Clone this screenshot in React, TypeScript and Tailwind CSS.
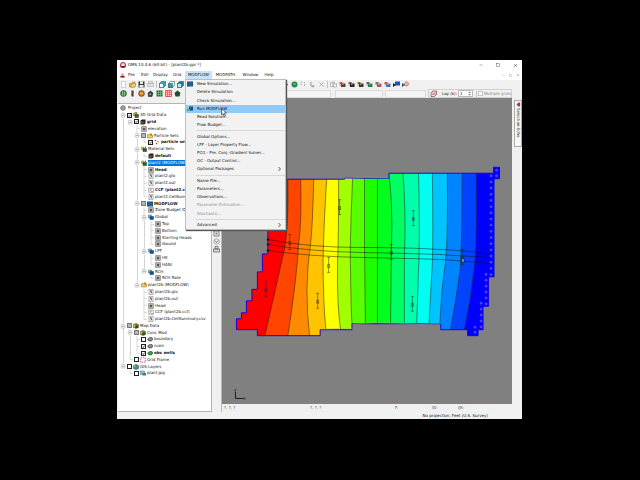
import React from 'react'
import { Minus, Square, X } from 'lucide-react'

type IconKind =
  | 'project'
  | 'cube'
  | 'darkGrid'
  | 'grid'
  | 'folder'
  | 'material'
  | 'particles'
  | 'file'
  | 'ccf'
  | 'modflow'
  | 'run'
  | 'package'
  | 'map'
  | 'coverage'
  | 'obs'
  | 'frame'
  | 'gis'
  | 'image'

interface TreeRow {
  level: number
  label: string
  icon: IconKind
  check?: 'on' | 'off' | 'gray'
  open?: boolean
  bold?: boolean
  selected?: boolean
}

interface MenuEntry {
  label: string
  disabled?: boolean
  active?: boolean
  submenu?: boolean
  icon?: IconKind
}

const rows: TreeRow[] = [
  { level: 0, label: '3D Grid Data', icon: 'cube', check: 'on', open: true },
  { level: 1, label: 'grid', icon: 'darkGrid', check: 'on', open: true, bold: true },
  { level: 2, label: 'elevation', icon: 'grid' },
  { level: 2, label: 'Particle Sets', icon: 'folder', check: 'gray', open: true },
  { level: 3, label: 'particle set', icon: 'particles', check: 'on', bold: true },
  { level: 2, label: 'Material Sets', icon: 'material', open: true },
  { level: 3, label: 'default', icon: 'darkGrid', bold: true },
  { level: 2, label: 'plant2 (MODFLOW)', icon: 'material', open: true, selected: true },
  { level: 3, label: 'Head', icon: 'grid', bold: true },
  { level: 3, label: 'plant2.glo', icon: 'file' },
  { level: 3, label: 'plant2.out', icon: 'file' },
  { level: 3, label: 'CCF (plant2.ccf)', icon: 'ccf', bold: true },
  { level: 3, label: 'plant2.CellSummary.csv', icon: 'file' },
  { level: 2, label: 'MODFLOW', icon: 'modflow', check: 'gray', open: true, bold: true },
  { level: 3, label: 'Zone Budget IDs', icon: 'grid' },
  { level: 3, label: 'Global', icon: 'package', open: true },
  { level: 4, label: 'Top', icon: 'grid' },
  { level: 4, label: 'Bottom', icon: 'grid' },
  { level: 4, label: 'Starting Heads', icon: 'grid' },
  { level: 4, label: 'Ibound', icon: 'grid' },
  { level: 3, label: 'LPF', icon: 'package', open: true },
  { level: 4, label: 'HK', icon: 'grid' },
  { level: 4, label: 'HANI', icon: 'grid' },
  { level: 3, label: 'RCH', icon: 'package', open: true },
  { level: 4, label: 'RCH Rate', icon: 'grid' },
  { level: 2, label: 'plant2b (MODFLOW)', icon: 'folder', open: true },
  { level: 3, label: 'plant2b.glo', icon: 'file' },
  { level: 3, label: 'plant2b.out', icon: 'file' },
  { level: 3, label: 'Head', icon: 'grid' },
  { level: 3, label: 'CCF (plant2b.ccf)', icon: 'ccf' },
  { level: 3, label: 'plant2b.CellSummary.csv', icon: 'file' },
  { level: 0, label: 'Map Data', icon: 'map', check: 'gray', open: true },
  { level: 1, label: 'Conc Mod', icon: 'map', check: 'gray', open: true },
  { level: 2, label: 'boundary', icon: 'coverage', check: 'off' },
  { level: 2, label: 'main', icon: 'coverage', check: 'on' },
  { level: 2, label: 'obs wells', icon: 'obs', check: 'on', bold: true },
  { level: 1, label: 'Grid Frame', icon: 'frame', check: 'off' },
  { level: 0, label: 'GIS Layers', icon: 'gis', check: 'off', open: true },
  { level: 1, label: 'plant.jpg', icon: 'image', check: 'off' }
]

const menuGroups: MenuEntry[][] = [
  [
    { label: 'New Simulation...', icon: 'modflow' },
    { label: 'Delete Simulation' },
    { label: 'Check Simulation...' },
    { label: 'Run MODFLOW', active: true, icon: 'run' },
    { label: 'Read Solution...' },
    { label: 'Flow Budget...' }
  ],
  [
    { label: 'Global Options...' },
    { label: 'LPF - Layer Property Flow...' },
    { label: 'PCG - Pre. Conj.-Gradient Solver...' },
    { label: 'OC - Output Control...' },
    { label: 'Optional Packages', submenu: true }
  ],
  [
    { label: 'Name File...' },
    { label: 'Parameters...' },
    { label: 'Observations...' },
    { label: 'Parameter Estimation...', disabled: true },
    { label: 'Stochastic...', disabled: true }
  ],
  [{ label: 'Advanced', submenu: true }]
]

// true when another row on the same branch follows further down
function hasLaterSibling(index: number, level: number) {
  for (let i = index + 1; i < rows.length; i++) {
    if (rows[i].level < level) return false
    if (rows[i].level === level) return true
  }
  return false
}

function TreeIcon({ kind }: { kind: IconKind }) {
  const shapes: Record<IconKind, React.ReactNode> = {
    project: (
      <>
        <circle cx="6" cy="6" r="4.5" fill="#d4d4d4" stroke="#444" strokeWidth="1.5" />
        <path d="M6 3v6M4 4v4M8 4v4" stroke="#555" />
      </>
    ),
    cube: (
      <>
        <path d="M1 3l3-2h4v6H1z" fill="#b4b83c" stroke="#4b5320" />
        <path d="M4 5h7v6H4z" fill="#2f6b3f" stroke="#143018" />
      </>
    ),
    darkGrid: (
      <>
        <path d="M1 3l3-2h7v8l-3 2H1z" fill="#222" />
        <path d="M3 4v6M6 4v6M2 6h7M2 8h7" stroke="#8b7b3c" strokeWidth=".8" />
      </>
    ),
    grid: (
      <>
        <path d="M1 1h10v10H1z" fill="#dcdcdc" stroke="#666" />
        <path d="M4 1v10M8 1v10M1 4h10M1 8h10" stroke="#777" />
        <path d="M4 4h4v4H4z" fill="#555" />
      </>
    ),
    folder: (
      <>
        <path d="M1 3h4l1 1h5v6H1z" fill="#f2d152" stroke="#8a6d1a" />
        <path d="M6 1h4v4H6z" fill="#c47a2c" />
      </>
    ),
    material: (
      <>
        <path d="M1 2h5v5H1z" fill="#e2cf4a" stroke="#80701f" />
        <path d="M4 5h7v6H4z" fill="#2f5c34" stroke="#1a331d" />
        <path d="M8 1h2v4H8z" fill="#3c8a49" />
      </>
    ),
    particles: (
      <>
        <circle cx="3" cy="3" r="1.5" fill="#c22" />
        <circle cx="8" cy="5" r="1.5" fill="#b55" />
        <circle cx="5" cy="9" r="1.5" fill="#c22" />
      </>
    ),
    file: (
      <>
        <path d="M2 .5h8v11H2z" fill="#fff" stroke="#555" />
        <path d="M7 3H5v2h2v3H5" fill="none" stroke="#222" strokeWidth="1.3" />
      </>
    ),
    ccf: (
      <>
        <path d="M1 2h10v9H1z" fill="#f4f4f4" stroke="#888" />
        <path d="M3 9l5-6M3 4h3M6 9h4" stroke="#555" />
      </>
    ),
    modflow: (
      <>
        <path d="M0 1h12v10H0z" fill="#12457a" />
        <path d="M1 4q3-2 5 0t5 0M1 8q3-2 5 0t5 0" fill="none" stroke="#5db0e8" />
      </>
    ),
    run: (
      <>
        <path d="M4 1h8v8H4z" fill="#12457a" />
        <path d="M5 4q2-2 3 0t3 0" fill="none" stroke="#5db0e8" />
        <path d="M0 4l6 4-6 4z" fill="#3f9c3a" stroke="#e8f4c8" strokeWidth=".6" />
      </>
    ),
    package: (
      <>
        <path d="M1 2h6v6H1z" fill="#7fc6cc" stroke="#23697a" />
        <path d="M4 5h7v6H4z" fill="#1c4f93" stroke="#15396b" />
      </>
    ),
    map: (
      <>
        <path d="M1 3l5-2 5 2v6l-5 2-5-2z" fill="#8b8f2b" stroke="#3e4313" />
        <path d="M5 5h5v5H5z" fill="#2a4a25" />
        <path d="M2 4h2v3H2z" fill="#e9df7a" />
      </>
    ),
    coverage: (
      <>
        <path d="M1 6l4-3h5l2 3-3 4H4z" fill="#777" stroke="#333" />
        <path d="M4 6h5" stroke="#ddd" />
      </>
    ),
    obs: <path d="M1 6l4-3h5l2 3-3 4H4z" fill="#2f9b4c" stroke="#1d4a2a" />,
    frame: <path d="M1.5 1.5h9v9h-9z" fill="none" stroke="#c4379c" strokeWidth="1.6" strokeDasharray="3 1.5" />,
    gis: (
      <>
        <path d="M1 3l5-2 5 2v6l-5 2-5-2z" fill="#3f8f86" stroke="#1d4f52" />
        <path d="M2 3h3v3H2z" fill="#9fd36c" />
      </>
    ),
    image: (
      <>
        <path d="M0 2h9v7H0z" fill="#8fc0dc" stroke="#47748c" />
        <path d="M5 6h7v5H5z" fill="#3d7f8f" />
      </>
    )
  }
  return (
    <svg viewBox="0 0 12 12" className="size-[6px] shrink-0">
      {shapes[kind]}
    </svg>
  )
}

function CheckBox({ state, label }: { state: 'on' | 'off' | 'gray'; label: string }) {
  const look =
    state === 'gray' ? 'bg-[#b5b5b5] border-[#777]' : 'bg-white border-[#222]'
  return (
    <span className="relative flex size-[5px] shrink-0">
      <input
        type="checkbox"
        aria-label={label}
        defaultChecked={state !== 'off'}
        className={`size-[5px] appearance-none border ${look}`}
      />
      {state === 'on' && (
        <svg viewBox="0 0 10 10" className="pointer-events-none absolute inset-0 size-[5px]">
          <path d="M2.5 5l2 2 3-4" fill="none" stroke="#111" strokeWidth="1.4" />
        </svg>
      )}
    </span>
  )
}

function ProjectTree() {
  return (
    <div className="flex h-[273px] flex-col pl-[2px] pt-px">
      <div className="flex min-h-0 flex-1 items-center gap-[2px]">
        <TreeIcon kind="project" />
        <span>Project</span>
      </div>
      {rows.map((row, index) => (
        <div key={index} className="flex min-h-0 flex-1 items-center">
          {Array.from({ length: row.level }, (_, level) => (
            <span
              key={level}
              className={`ml-[3px] w-[4px] shrink-0 self-stretch border-l ${
                hasLaterSibling(index, level) ? 'border-[#d4d4d4]' : 'border-transparent'
              }`}
            />
          ))}
          <span className="mr-px flex w-[6px] shrink-0 items-center justify-center self-stretch">
            <svg viewBox="0 0 12 14" className="h-full w-[6px]">
              <path
                d={hasLaterSibling(index, row.level) ? 'M6 0v14M6 7h6' : 'M6 0v7h6'}
                fill="none"
                stroke="#c8c8c8"
                strokeWidth="1.5"
              />
              {row.open && (
                <>
                  <path d="M2.5 3.5h7v7h-7z" fill="#fff" stroke="#a0a0a0" />
                  <path d="M4 7h4" stroke="#444" />
                </>
              )}
            </svg>
          </span>
          {row.check && (
            <span className="mr-px flex">
              <CheckBox state={row.check} label={row.label} />
            </span>
          )}
          <TreeIcon kind={row.icon} />
          <span
            className={`ml-px whitespace-nowrap ${row.bold ? 'font-bold' : ''} ${
              row.selected ? 'bg-[#0078d7] text-white' : ''
            }`}
          >
            {row.label}
          </span>
        </div>
      ))}
    </div>
  )
}

function ModflowMenu() {
  return (
    <div className="absolute left-0 top-full z-10 flex h-[151px] w-[101px] flex-col border border-[#bdbdbd] bg-[#f2f2f2] shadow-[1px_1px_1px_#555]">
      {menuGroups.map((group, g) => (
        <React.Fragment key={g}>
          {g > 0 && <hr className="my-px ml-[10px] border-[#d7d7d7]" />}
          {group.map((item) => (
            <button
              key={item.label}
              disabled={item.disabled}
              className={`flex min-h-0 flex-1 items-center text-left ${
                item.active ? 'bg-[#91c9f7]' : ''
              } ${item.disabled ? 'text-[#8d8d8d]' : ''}`}
            >
              <span className="flex w-[11px] shrink-0 items-center pl-px">
                {item.icon && <TreeIcon kind={item.icon} />}
              </span>
              <span className="flex-1 whitespace-nowrap">{item.label}</span>
              {item.submenu && (
                <svg viewBox="0 0 6 8" className="mr-[4px] h-[4px] w-[3px]">
                  <path d="M1 0l4 4-4 4" fill="none" stroke="#222" strokeWidth="1.4" />
                </svg>
              )}
            </button>
          ))}
        </React.Fragment>
      ))}
      <svg viewBox="0 0 12 18" className="absolute left-[35px] top-[28px] h-[9px] w-[6px]">
        <path d="M1 1v13l3-3 2.5 6 2.5-1-2.5-6H11z" fill="#fff" stroke="#111" strokeWidth="1.2" />
      </svg>
    </div>
  )
}

function ToolButton({ label, children }: { label: string; children: React.ReactNode }) {
  return (
    <button aria-label={label} className="flex w-[9px] shrink-0 items-center justify-center">
      <svg viewBox="0 0 14 14" className="size-[7px]">
        {children}
      </svg>
    </button>
  )
}

function Cube({ face, top }: { face: string; top: string }) {
  return (
    <>
      <path d="M1 5l4-4h8v8l-4 4H1z" fill={top} stroke="#14505a" />
      <path d="M1 5h8v8H1z" fill={face} stroke="#14505a" />
    </>
  )
}

function RunTool({ color, corner }: { color: string; corner: string }) {
  return (
    <>
      <path d="M1 2h6v4H1z" fill={corner} />
      <path d="M4 5h9v7H4z" fill={color} />
      <path d="M1 8h4M6 8h5M6 10h5" stroke="#444" />
      <path d="M6 7h3" stroke="#e8e08c" />
    </>
  )
}

function Divider() {
  return <span className="mx-px h-[7px] border-l border-[#c3c3c3]" />
}

const simTools = [
  { label: 'Wells', color: '#4c4a2a', corner: '#d45b3a' },
  { label: 'Rivers', color: '#1f1f1f', corner: '#8a5a3a' },
  { label: 'Drains', color: '#3a3a22', corner: '#a8582f' },
  { label: 'Recharge', color: '#2f8a55', corner: '#6a5a4a' },
  { label: 'Stress data', color: '#c26565', corner: '#8a6a6a' },
  { label: 'Boundary', color: '#5f7bc0', corner: '#c45555' }
]

function MainToolbar() {
  return (
    <div className="flex h-[9px] items-center pl-[2px]">
      <ToolButton label="New">
        <path d="M3 1h8v12H3z" fill="#fff" stroke="#aaa" />
      </ToolButton>
      <ToolButton label="Open">
        <path d="M1 5h5l1-3h5v10H1z" fill="#f0c03e" stroke="#8d6412" />
        <path d="M3 12l3-6h8l-3 6z" fill="#fbe08a" stroke="#8d6412" />
      </ToolButton>
      <ToolButton label="Save">
        <path d="M1 1h12v12H1z" fill="#333" />
        <path d="M4 1h6v5H4zM3 8h8v5H3z" fill="#eee" />
      </ToolButton>
      <ToolButton label="Print">
        <path d="M3 1h8v4H3zM1 5h12v6H1z" fill="#e3e3e3" stroke="#9c9c9c" />
      </ToolButton>
      <Divider />
      <ToolButton label="Plan view">
        <Cube face="#fff" top="#28a5b5" />
      </ToolButton>
      <ToolButton label="Front view">
        <Cube face="#2a9bb0" top="#e8f6f8" />
      </ToolButton>
      <ToolButton label="Side view">
        <Cube face="#bfe6ea" top="#167f92" />
      </ToolButton>
      {/* middle group sits under the open menu */}
      <span className="w-[100px] shrink-0" />
      <svg viewBox="0 0 6 10" className="h-[5px] w-[3px] shrink-0">
        <path d="M0 0l6 5-6 5z" fill="#111" />
      </svg>
      <span className="w-[2px] shrink-0" />
      <ToolButton label="Refresh">
        <circle cx="7" cy="7" r="6" fill="#1f8a4c" />
        <circle cx="7" cy="6" r="2.5" fill="#4fc07c" />
      </ToolButton>
      <ToolButton label="Select">
        <path d="M2 2h3M8 3h2M2 5v3M9 6v4" stroke="#aaa" strokeWidth="2" />
      </ToolButton>
      <ToolButton label="Zoom">
        <path d="M4 2v8h7M8 8v5" fill="none" stroke="#999" strokeWidth="2" />
      </ToolButton>
      <ToolButton label="Delete">
        <path d="M3 3l8 8M11 3l-8 8" stroke="#aaa" strokeWidth="2" />
      </ToolButton>
      <Divider />
      <ToolButton label="Cell properties">
        <path d="M1 3h5v8H1zM7 5h6v7H7z" fill="#eee" stroke="#888" />
        <path d="M5 2h5" stroke="#888" />
      </ToolButton>
      {simTools.map((tool) => (
        <ToolButton key={tool.label} label={tool.label}>
          <RunTool color={tool.color} corner={tool.corner} />
        </ToolButton>
      ))}
      <ToolButton label="Run MODFLOW">
        <path d="M4 1h10v8H4z" fill="#1d56b5" />
        <path d="M0 4l6 4-6 4z" fill="#222" />
      </ToolButton>
      <ToolButton label="Run MODPATH">
        <path d="M5 4l4-3 5 4-3 5-6-1z" fill="#e8b0a8" stroke="#c0483c" />
        <path d="M0 4l6 4-6 4z" fill="#2255aa" />
      </ToolButton>
    </div>
  )
}

function OptionsToolbar() {
  return (
    <div className="flex h-[9px] items-center pl-[2px]">
      <ToolButton label="Map module">
        <circle cx="7" cy="7" r="6" fill="#2f9444" stroke="#17421f" />
        <path d="M5 3v8M9 3v8" stroke="#d7efc4" />
      </ToolButton>
      <ToolButton label="Borehole module">
        <path d="M5 1h4v12H5z" fill="#333" />
        <path d="M5 4h4v3H5z" fill="#b43a2a" />
      </ToolButton>
      <ToolButton label="TIN module">
        <circle cx="7" cy="7" r="6" fill="#c66a22" stroke="#6b3110" />
        <path d="M4 5h6v4H4z" fill="#f0b44c" />
      </ToolButton>
      <ToolButton label="Solid module">
        <path d="M2 6l5-4 5 4-2 7H3z" fill="#2c4a5c" stroke="#111" />
        <path d="M5 7h3v3H5z" fill="#c8b04c" />
      </ToolButton>
      <ToolButton label="3D grid module">
        <path d="M1 1h12v12H1z" fill="#1f6b3c" />
        <path d="M5 1v12M9 1v12M1 5h12M1 9h12" stroke="#9ad0a0" />
      </ToolButton>
      <ToolButton label="2D grid module">
        <path d="M1 1h12v12H1z" fill="#f6dada" stroke="#c33" strokeWidth="1.5" />
        <path d="M5 1v12M9 1v12M1 5h12M1 9h12" stroke="#c33" />
      </ToolButton>
      <ToolButton label="Scatter module">
        <path d="M7 1l6 5-2 7H3L1 6z" fill="#1f4a35" />
      </ToolButton>
      <ToolButton label="GIS module">
        <path d="M4 1h6v12H4z" fill="#23395c" />
      </ToolButton>
      <span className="w-[94px] shrink-0" />
      <select aria-label="Data set" disabled className="h-[8px] w-[46px] appearance-none border border-[#dadada] bg-[#f5f5f5]" />
      <span className="w-[4px] shrink-0" />
      <select aria-label="Time step" disabled className="h-[8px] w-[48px] appearance-none border border-[#dadada] bg-[#f5f5f5]" />
      <span className="w-[2px] shrink-0" />
      <select aria-label="Units" disabled className="h-[8px] w-[41px] appearance-none border border-[#dadada] bg-[#f5f5f5]" />
      <span className="w-[2px] shrink-0" />
      <div className="flex h-[9px] flex-1 items-center border border-[#d2d2d2]">
        <ToolButton label="Layers">
          <path d="M2 6l4-4h7v7l-4 4H2z" fill="#f4e4e4" stroke="#853b3b" strokeWidth="1.4" />
          <path d="M5 6h5v4M4 9h5" fill="none" stroke="#853b3b" />
        </ToolButton>
        <label htmlFor="layer" className="ml-[4px] w-[16px] whitespace-nowrap">
          Lay (k):
        </label>
        <span className="flex h-[7px] w-[15px] items-center justify-between border border-[#bbb] bg-white pr-px">
          <input id="layer" type="text" defaultValue="1" className="w-[8px] pl-px leading-none outline-none" />
          <svg viewBox="0 0 6 12" className="h-[5px] w-[3px]">
            <path d="M0 4l3-3 3 3zM0 8l3 3 3-3z" fill="#555" />
          </svg>
        </span>
        <label className="ml-[3px] flex flex-1 items-center gap-px whitespace-nowrap border-l border-[#c8c8c8] pl-px text-[#8a8a8a]">
          <input type="checkbox" disabled className="size-[5px] shrink-0 appearance-none border border-[#c4c4c4] bg-white" />
          Multiple grids
        </label>
      </div>
      <span className="w-[10px] shrink-0" />
    </div>
  )
}

const outline =
  'M286 179.5H345V178.5H389.5V173.5H494.5V167.5H500.5V179H495V277.5H489.5V307H484V330.5H479V336.5H468.5V330.5H441.5V324.5H352.5V330.5H320.5V336.5H257.5V330.5H236.5V319.5H241.5V313.5H246.5V301.5H252V290H257.5V272.5H262.5V254.5H268V231H286Z'

// head contours, west to east; each one is the left edge of its colour band
const contours = [
  { color: '#ff4500', d: 'M288 165V180Q289 225 285 248L265 337' },
  { color: '#ff8a00', d: 'M301 165V180Q302 225 299 243Q297 280 288 337' },
  { color: '#ffc400', d: 'M314 165V180Q313 225 311 243Q304 290 310 337' },
  { color: '#ffff00', d: 'M327 165V180Q322 260 324 290Q324 310 327 337' },
  { color: '#a2ff00', d: 'M339 165V180Q339 240 338 260Q337 310 342 337' },
  { color: '#58ff00', d: 'M353 165V180Q350 250 351 270Q351 300 353 337' },
  { color: '#1cff00', d: 'M365 165V180L365 245L366 337' },
  { color: '#00ff1c', d: 'M378 165V337' },
  { color: '#00ff62', d: 'M388 165Q394 200 392 250L391 337' },
  { color: '#00ffac', d: 'M403 165Q407 210 405 260L405 337' },
  { color: '#00fff0', d: 'M419 165Q421 240 419 275L417 337' },
  { color: '#00c4ff', d: 'M433 165Q434 245 433 265L429 337' },
  { color: '#0084ff', d: 'M448 165Q449 240 446 265Q442 290 440 337' },
  { color: '#0044ff', d: 'M463 165Q463 240 461 270Q457 300 450 337' },
  { color: '#0000ff', d: 'M477 165Q478 230 476 260Q472 300 464 337' }
]

const wells = [
  [340, 208],
  [290, 243],
  [329, 266],
  [318, 302],
  [266, 290],
  [414, 219],
  [392, 253],
  [413, 305],
  [463, 258]
]

const constantHead = [
  ...Array.from({ length: 17 }, (_, i) => [492, 176 + i * 6.2]),
  ...Array.from({ length: 6 }, (_, i) => [487, 275 + i * 5.9]),
  ...Array.from({ length: 5 }, (_, i) => [482, 304 + i * 5.9]),
  [476, 328],
  [476, 333],
  [497.5, 170.5],
  [497.5, 176]
]

function ModelView() {
  return (
    <svg
      viewBox="222 98 291 306"
      preserveAspectRatio="xMinYMin meet"
      className="h-full w-full"
      role="img"
      aria-label="Head contours"
    >
      <clipPath id="model">
        <path d={outline} />
      </clipPath>
      <g clipPath="url(#model)">
        <path d={outline} fill="#ff0000" />
        {contours.map((c) => (
          <path key={c.color} d={`${c.d}H510V165Z`} fill={c.color} />
        ))}
        {contours.map((c) => (
          <path key={c.color} d={c.d} fill="none" stroke="#222" strokeOpacity=".75" strokeWidth=".7" />
        ))}
      </g>
      <path d={outline} fill="none" stroke="#2000d8" strokeWidth="1" />
      <path d="M345 179q22-3 44-1M321 330q16-1 32-1M353 325q24-3 46-1t43 0" fill="none" stroke="#b8a8a8" strokeWidth=".5" />
      <g fill="none" stroke="#111" strokeOpacity=".8" strokeWidth=".6">
        <path d="M268 240Q310 248 360 248T440 250Q470 251 491 255" />
        <path d="M268 245Q310 252 360 253T440 255Q470 257 491 258" />
        <path d="M268 251Q310 257 360 258T440 260Q470 262 491 264" />
      </g>
      <path d="M267 239h2v2h-2zM267 244h2v2h-2zM267 250h2v2h-2z" fill="#111" />
      {wells.map(([x, y]) => (
        <g key={`${x}-${y}`} stroke="#222" strokeOpacity=".8" strokeWidth=".6" fill="none">
          <path d={`M${x} ${y - 8}V${y + 7}M${x - 1.5} ${y - 8}h3M${x - 1.5} ${y + 7}h3`} />
          <path d={`M${x - 1} ${y - 1}h2v3h-2z`} />
        </g>
      ))}
      <path d="M462.5 259h2.5v4h-2.5z" fill="#5fa8c8" stroke="#111" strokeWidth=".6" />
      {constantHead.map(([x, y], i) => (
        <circle key={i} cx={x} cy={y} r="1" fill="#2a1cff" stroke="#8d6cff" strokeWidth=".6" />
      ))}
      <path d="M235.5 393v6.5h8" fill="none" stroke="#111" strokeWidth=".9" />
      <text x="234" y="393" fontSize="4" fill="#111">
        Y
      </text>
      <text x="243" y="401" fontSize="4" fill="#111">
        X
      </text>
    </svg>
  )
}

function SideTools() {
  return (
    <div className="flex w-[10px] shrink-0 flex-col items-center gap-px border-r border-[#b8b8b8] bg-[#f0f0f0] pt-[132px]">
      <ToolButton label="Select cells">
        <path d="M2 2h10v10H2z" fill="#eee" stroke="#555" strokeWidth="1.4" />
        <path d="M5 5h4v4H5z" fill="#888" />
      </ToolButton>
      <ToolButton label="Select wells">
        <circle cx="7" cy="7" r="5.5" fill="#f4f4f4" stroke="#777" strokeWidth="1.2" />
        <path d="M4 5l3 4 3-4" fill="none" stroke="#555" strokeWidth="1.5" />
      </ToolButton>
      <ToolButton label="Print area">
        <path d="M4 1h6v5H4zM1 6h12v6H1z" fill="#ddd" stroke="#555" strokeWidth="1.4" />
      </ToolButton>
    </div>
  )
}

export default function App() {
  return (
    <div className="flex min-h-screen bg-black pb-[61px] pl-[117px] pr-[118px] pt-[60px] font-['DejaVu_Sans',sans-serif] text-[4px] leading-[6px] text-[#111]">
      <div className="flex min-w-0 flex-1 flex-col bg-[#f0f0f0]">
        <header className="flex h-[10px] items-center bg-white pl-[3px] pr-[4px]">
          <svg viewBox="0 0 12 12" className="mr-[2px] size-[6px]">
            <circle cx="6" cy="6" r="5" fill="#f3d5d5" stroke="#b01c2e" strokeWidth="2" />
            <path d="M1 8h10v3H1z" fill="#8f1525" />
          </svg>
          <h1 className="flex-1 whitespace-nowrap">GMS 10.4.6 (64-bit) - [plant2b.gpr *]</h1>
          <div className="flex gap-[13px]">
            <button aria-label="Minimize">
              <Minus size={4} />
            </button>
            <button aria-label="Maximize">
              <Square size={4} />
            </button>
            <button aria-label="Close">
              <X size={5} />
            </button>
          </div>
        </header>

        <nav className="flex h-[10px] items-center bg-white pl-[3px] pr-[2px]">
          <svg viewBox="0 0 12 12" className="mr-[3px] size-[5px]">
            <path d="M2 6l4-5 4 5z" fill="#c65" />
            <path d="M1 7h10v4H1z" fill="#912" />
          </svg>
          <div className="flex flex-1 items-center">
            <button className="w-[13px] text-left">File</button>
            <button className="w-[12px] text-left">Edit</button>
            <button className="w-[20px] text-left">Display</button>
            <button className="w-[12px] text-left">Grid</button>
            <div className="relative">
              <button className="flex h-[8px] w-[27px] items-center justify-center bg-[#c6e2f9]">MODFLOW</button>
              <ModflowMenu />
            </div>
            <button className="w-[27px] text-center">MODPATH</button>
            <button className="w-[23px] text-center">Window</button>
            <button className="w-[14px] text-center">Help</button>
          </div>
          <div className="flex items-center gap-[4px] text-[#777]">
            <button aria-label="Minimize document">
              <Minus size={3} />
            </button>
            <button aria-label="Restore document">
              <Square size={3} />
            </button>
            <button aria-label="Close document">
              <X size={4} />
            </button>
          </div>
        </nav>

        <MainToolbar />
        <OptionsToolbar />

        <main className="flex min-h-0 flex-1">
          <aside className="flex w-[95px] shrink-0 flex-col pt-[5px]">
            <div className="ml-px flex-1 overflow-hidden border-b border-r border-t border-[#b4b4b4] bg-white">
              <ProjectTree />
            </div>
          </aside>
          <SideTools />
          <section className="flex min-w-0 flex-1 flex-col">
            <div className="min-h-0 flex-1 bg-[#808080]">
              <ModelView />
            </div>
            <div className="flex h-[8px] shrink-0 items-center whitespace-nowrap text-[#555]">
              <span className="w-[88px] pl-[2px]">?, ?, ?</span>
              <span className="w-[85px]">?, ?, ?</span>
              <span className="w-[37px]">F:</span>
              <span className="w-[26px]">ID:</span>
              <span>IJK:</span>
            </div>
          </section>
          <div className="flex w-[10px] shrink-0 justify-end pt-[2px]">
            <button className="flex h-[47px] w-[8px] flex-col items-center gap-px border border-[#aaa] bg-[#f7f7f7] pt-px">
              <svg viewBox="0 0 12 12" className="size-[5px] shrink-0">
                <path d="M1 6l5-5v10zM6 1h4v10H6z" fill="#a33a4a" />
              </svg>
              <span className="whitespace-nowrap [writing-mode:vertical-rl]">Selection Echo</span>
            </button>
          </div>
        </main>

        <footer className="flex h-[7px] shrink-0 items-center justify-end bg-[#eef2f3] pr-[34px]">
          <span>No projection, Feet (U.S. Survey)</span>
        </footer>
      </div>
    </div>
  )
}
